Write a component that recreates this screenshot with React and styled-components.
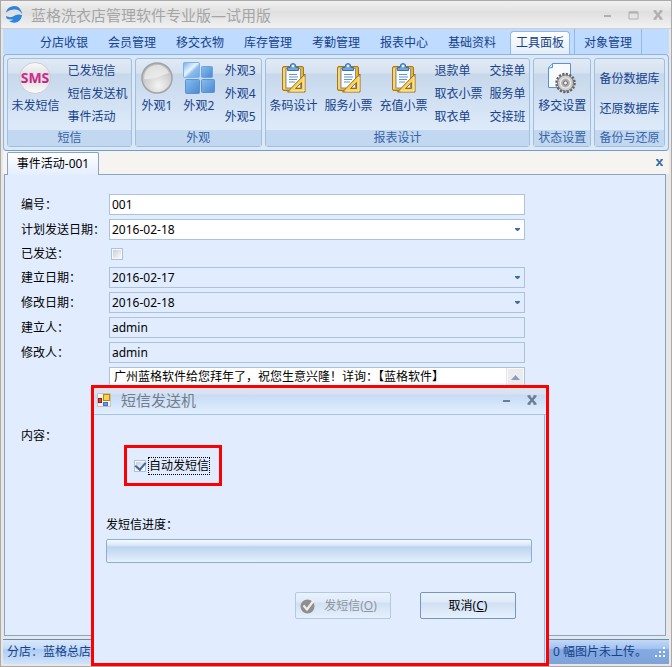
import React from 'react';
import styled, { createGlobalStyle } from 'styled-components';

const topTabs = ['分店收银', '会员管理', '移交衣物', '库存管理', '考勤管理', '报表中心', '基础资料', '工具面板'];

const LogoIcon = () => (
    <svg width="18" height="18" viewBox="0 0 18 18" aria-hidden="true">
        <path d="M1 6.500 A8 8 0 0 1 16 4.500 Q17 6 17.200 8 Q14 3.200 9 3.600 Q4.500 3.800 1 6.500 Z" fill="#2e86dc"/>
        <path d="M1 10 Q4.500 12 8 10.500 Q12 7.500 17 9 Q16.500 14 12.500 16 Q8 18 4 15 Q7 15 8.500 13.200 Q4.500 14 1.500 12.500 Z" fill="#2e86dc"/>
    </svg>
);

const SmsIcon = () => (
    <svg width="32" height="32" viewBox="0 0 32 32">
        <defs>
            <linearGradient id="smsBall" x1="0" y1="0" x2="0" y2="1">
                <stop offset="0" stopColor="#fafafa"/>
                <stop offset="0.5" stopColor="#dcdcde"/>
                <stop offset="1" stopColor="#fdfdfd"/>
            </linearGradient>
            <linearGradient id="smsText" x1="0" y1="0" x2="0" y2="1">
                <stop offset="0" stopColor="#e0359f"/>
                <stop offset="1" stopColor="#b8197c"/>
            </linearGradient>
        </defs>
        <circle cx="16" cy="16" r="15.500" fill="url(#smsBall)" stroke="#c9ced6"/>
        <SmsText x="16" y="21" textAnchor="middle">SMS</SmsText>
    </svg>
);

const BallIcon = () => (
    <svg width="32" height="32" viewBox="0 0 32 32">
        <defs>
            <radialGradient id="ball" cx="0.55" cy="0.75" r="0.75">
                <stop offset="0" stopColor="#f4f4f4"/>
                <stop offset="0.6" stopColor="#cfcfcf"/>
                <stop offset="1" stopColor="#b5b5b5"/>
            </radialGradient>
        </defs>
        <circle cx="16" cy="16" r="15" fill="url(#ball)" stroke="#a3a3a3" strokeWidth="1.500"/>
        <path d="M3 17 A13 13 0 0 1 28 11 Q24 12 20 14 Q12 18 3 17 Z" fill="#f3f3f3" opacity="0.65"/>
    </svg>
);

const SquaresIcon = () => (
    <svg width="32" height="32" viewBox="0 0 32 32">
        <defs>
            <linearGradient id="sqLight" x1="0" y1="0" x2="1" y2="1">
                <stop offset="0" stopColor="#74b0ea"/>
                <stop offset="0.45" stopColor="#eaf4fd"/>
                <stop offset="0.6" stopColor="#8bbdee"/>
                <stop offset="1" stopColor="#6ba5e2"/>
            </linearGradient>
            <linearGradient id="sqBlue" x1="0" y1="0" x2="1" y2="1">
                <stop offset="0" stopColor="#8abdf0"/>
                <stop offset="1" stopColor="#4988cf"/>
            </linearGradient>
        </defs>
        <rect x="0.500" y="0.500" width="16" height="15" rx="1" fill="url(#sqLight)" stroke="#7fb2e6"/>
        <rect x="18.500" y="4.500" width="11" height="11" rx="1" fill="url(#sqBlue)" stroke="#6fa4de"/>
        <rect x="2.500" y="17.500" width="14" height="14" rx="1" fill="url(#sqBlue)" stroke="#5b94d6"/>
        <rect x="18.500" y="17.500" width="13" height="13" rx="1" fill="url(#sqBlue)" stroke="#5b94d6"/>
    </svg>
);

const ClipboardIcon = () => (
    <svg width="32" height="32" viewBox="0 0 32 32">
        <rect x="5.500" y="4.500" width="21" height="24" rx="1.500" fill="#f0b429" stroke="#a8741a"/>
        <path d="M7 6 V27" stroke="#ffe08a" strokeWidth="1.500"/>
        <path d="M9 6.500 H23.500 V26 H9 Z" fill="#fafdff" stroke="#7693b8"/>
        <path d="M12 12.500 h8 M12 15 h9 M12 17.500 h8 M12 20 h6" stroke="#6a93c6" strokeWidth="1"/>
        <path d="M10.500 8.500 V5.500 H13 Q13 1.500 16 1.500 Q19 1.500 19 5.500 H21.500 V8.500 Z" fill="#6ea6dd" stroke="#3f6fa8"/>
        <circle cx="16" cy="4" r="1.200" fill="#eef6ff"/>
        <path d="M28 12 V30 H10.500 Z M24.500 20.500 L18.500 26.500 H24.500 Z" fill="#f8d45c" stroke="#a06a1e" fillRule="evenodd"/>
        <path d="M27 15 V29 H13.500" fill="none" stroke="#fff0ad" strokeWidth="1"/>
    </svg>
);

const GearPageIcon = () => (
    <svg width="32" height="32" viewBox="0 0 32 32">
        <path d="M6.500 1.500 H24.500 V25.500 H2.500 V5.500 Z" fill="#f7fbff" stroke="#5b92cf"/>
        <path d="M2.500 6 L6.500 5.500 V1.500" fill="#d4e6f8" stroke="#5b92cf"/>
        <circle cx="19.500" cy="21" r="9" fill="none" stroke="#626262" strokeWidth="2.500" strokeDasharray="2.200 1.334"/>
        <circle cx="19.500" cy="21" r="8" fill="#cdcdcd" stroke="#757575"/>
        <circle cx="19.500" cy="21" r="5" fill="#b0b0b0" stroke="#ececec" strokeWidth="1.200"/>
        <circle cx="19.500" cy="21" r="2" fill="#f2f4f6" stroke="#6a6a6a"/>
    </svg>
);

const FormIcon = () => (
    <svg width="14" height="14" viewBox="0 0 14 14" aria-hidden="true">
        <path d="M0.500 0.500 h13 v13 h-13 z" fill="#f4f2ef" stroke="#c5c2be"/>
        <rect x="6.500" y="1.500" width="6" height="6" fill="#fbd04b" stroke="#b98512"/>
        <rect x="1.500" y="5.500" width="3" height="4" fill="#d9472f" stroke="#9b1c10"/>
        <rect x="6.500" y="9.500" width="4" height="3" fill="#5b9bf0" stroke="#3b74c4"/>
    </svg>
);

const CheckBallIcon = () => (
    <svg width="16" height="16" viewBox="0 0 16 16" aria-hidden="true">
        <circle cx="7.500" cy="8.500" r="7" fill="#8f8f8f"/>
        <path d="M3.500 7.500 L7 11.500 L14 2" fill="none" stroke="#eeeeea" strokeWidth="2.200"/>
    </svg>
);

const ArrowDown = () => (
    <svg width="5" height="3" viewBox="0 0 5 3"><path d="M0 0 H5 V1 L3 3 H2 L0 1 Z" fill="#3a6ea5"/></svg>
);

const ArrowUp = () => (
    <svg width="9" height="5" viewBox="0 0 9 5"><path d="M0 5 L4.500 0 L9 5 Z" fill="#8e9cc4"/></svg>
);

const MinIcon = () => (
    <svg width="12" height="12" viewBox="0 0 12 12"><path d="M2 6 h7 v2 h-7 z" fill="currentColor"/></svg>
);

const MaxIcon = () => (
    <svg width="12" height="12" viewBox="0 0 12 12">
        <path d="M2 3 h9 v7 h-9 z" fill="none" stroke="currentColor"/>
        <path d="M2 3.500 h9" stroke="currentColor" strokeWidth="2"/>
    </svg>
);

const CloseIcon = ({ size = 12 }) => (
    <svg width={size} height={size} viewBox="0 0 12 12">
        <path d="M2.500 2 L9.500 10 M9.500 2 L2.500 10" stroke="currentColor" strokeWidth="2.500"/>
        <path d="M1.500 2 h3 M7.500 2 h3 M1.500 10 h3 M7.500 10 h3" stroke="currentColor" strokeWidth="1.500"/>
    </svg>
);

const GripIcon = () => (
    <svg width="11" height="11" viewBox="0 0 11 11" aria-hidden="true">
        <path d="M8 0h2v2h-2z M4 4h2v2h-2z M8 4h2v2h-2z M0 8h2v2h-2z M4 8h2v2h-2z M8 8h2v2h-2z" fill="#f2f7ff"/>
    </svg>
);

const BigItem = ({ icon, text }) => (
    <BigButton type="button">
        {icon}
        {text}
    </BigButton>
);

const SmallItems = ({ items, spread }) => (
    <SmallColumn $spread={spread}>
        {items.map((item) => <SmallButton type="button" key={item}>{item}</SmallButton>)}
    </SmallColumn>
);

const Group = ({ title, size, gap, children }) => (
    <GroupBox $size={size} aria-label={title}>
        <GroupItems $gap={gap}>{children}</GroupItems>
        <GroupTitle>{title}</GroupTitle>
    </GroupBox>
);

const TextField = ({ id, label, value, readOnly, date }) => (
    <>
        <Label htmlFor={id}>{label}</Label>
        <Field $readOnly={readOnly}>
            <FieldInput id={id} type="text" defaultValue={value} readOnly={readOnly}/>
            {date && <DropButton type="button" aria-label="选择日期"><ArrowDown/></DropButton>}
        </Field>
    </>
);

const SmsDialog = () => (
    <Dialog role="dialog" aria-labelledby="smsTitle">
        <DialogHeader>
            <FormIcon/>
            <DialogTitle id="smsTitle">短信发送机</DialogTitle>
            <DialogTool type="button" aria-label="最小化"><MinIcon/></DialogTool>
            <DialogTool type="button" aria-label="关闭"><CloseIcon/></DialogTool>
        </DialogHeader>
        <DialogBody>
            <Highlight>
                <CheckBox id="autoSend" type="checkbox" defaultChecked/>
                <FocusLabel htmlFor="autoSend">自动发短信</FocusLabel>
            </Highlight>
            <ProgressLabel htmlFor="progress">发短信进度：</ProgressLabel>
            <ProgressBar id="progress" value="0" max="100"/>
            <DialogButtons>
                <DialogButton type="button" disabled>
                    <CheckBallIcon/>
                    <span>发短信(<u>O</u>)</span>
                </DialogButton>
                <DialogButton type="button"><span>取消(<u>C</u>)</span></DialogButton>
            </DialogButtons>
        </DialogBody>
    </Dialog>
);

const App = () => {
    return (
        <Window>
            <GlobalStyle/>
            <TitleBar>
                <LogoIcon/>
                <Title>蓝格洗衣店管理软件专业版—试用版</Title>
                <TitleTool type="button" aria-label="最小化"><MinIcon/></TitleTool>
                <TitleTool type="button" aria-label="最大化"><MaxIcon/></TitleTool>
                <TitleTool type="button" aria-label="关闭"><CloseIcon/></TitleTool>
            </TitleBar>
            <Tabs>
                {topTabs.map((tab) => (
                    <Tab type="button" key={tab} $active={tab === '工具面板'}>{tab}</Tab>
                ))}
                <SideTab type="button">对象管理</SideTab>
            </Tabs>
            <Ribbon>
                <Group title="短信" size={125} gap={8}>
                    <BigItem icon={<SmsIcon/>} text="未发短信"/>
                    <SmallItems items={['已发短信', '短信发送机', '事件活动']}/>
                </Group>
                <Group title="外观" size={127} gap={10}>
                    <BigItem icon={<BallIcon/>} text="外观1"/>
                    <BigItem icon={<SquaresIcon/>} text="外观2"/>
                    <SmallItems items={['外观3', '外观4', '外观5']}/>
                </Group>
                <Group title="报表设计" size={268} gap={7}>
                    <BigItem icon={<ClipboardIcon/>} text="条码设计"/>
                    <BigItem icon={<ClipboardIcon/>} text="服务小票"/>
                    <BigItem icon={<ClipboardIcon/>} text="充值小票"/>
                    <SmallItems items={['退款单', '取衣小票', '取衣单']}/>
                    <SmallItems items={['交接单', '服务单', '交接班']}/>
                </Group>
                <Group title="状态设置" size={57} gap={0}>
                    <BigItem icon={<GearPageIcon/>} text="移交设置"/>
                </Group>
                <Group title="备份与还原" size={70} gap={0}>
                    <SmallItems items={['备份数据库', '还原数据库']} spread/>
                </Group>
            </Ribbon>
            <DocTabs>
                <DocTab type="button">事件活动-001</DocTab>
                <DocClose type="button" aria-label="关闭"><CloseIcon size={9}/></DocClose>
            </DocTabs>
            <Page>
                <Form>
                    <TextField id="code" label="编号：" value="001"/>
                    <TextField id="planDate" label="计划发送日期：" value="2016-02-18" date/>
                    <Label htmlFor="sent">已发送：</Label>
                    <CheckCell><CheckBox id="sent" type="checkbox"/></CheckCell>
                    <TextField id="createDate" label="建立日期：" value="2016-02-17" readOnly date/>
                    <TextField id="editDate" label="修改日期：" value="2016-02-18" readOnly date/>
                    <TextField id="creator" label="建立人：" value="admin" readOnly/>
                    <TextField id="editor" label="修改人：" value="admin" readOnly/>
                    <Label htmlFor="content">内容：</Label>
                    <Memo>
                        <MemoText id="content" defaultValue="广州蓝格软件给您拜年了，祝您生意兴隆！详询：【蓝格软件】"/>
                        <MemoScroll><ScrollButton type="button" aria-label="向上"><ArrowUp/></ScrollButton></MemoScroll>
                    </Memo>
                </Form>
            </Page>
            <StatusBar>
                <StatusLeft>分店：蓝格总店</StatusLeft>
                <StatusRight>
                    0 幅图片未上传。
                    <GripIcon/>
                </StatusRight>
            </StatusBar>
            <SmsDialog/>
        </Window>
    );
};

const GlobalStyle = createGlobalStyle`
  * {
    box-sizing: border-box;
  }

  body {
    margin: 0;
    font-family: "Noto Sans", "Noto Sans CJK SC", sans-serif;
    font-size: 12px;
    line-height: 18px;
    color: #000;
  }

  button, input, textarea {
    font: inherit;
    color: inherit;
    margin: 0;
    padding: 0;
    border: none;
    background: none;
    white-space: nowrap;
  }

  svg {
    display: block;
    flex: none;
  }
`;

const SmsText = styled.text`
  font-family: "Noto Sans", sans-serif;
  font-size: 14px;
  font-weight: 700;
  fill: url(#smsText);
`;

const Window = styled.div`
  position: relative;
  display: flex;
  flex-direction: column;
  min-height: 100vh;
  padding: 0 2px 2px;
  border: 1px solid #aaa;
  background: #e8e7e4;
`;

const TitleBar = styled.header`
  display: flex;
  align-items: center;
  height: 28px;
  padding: 0 1px 0 4px;
  margin: 0 -2px;
  border-bottom: 1px solid #d0cfcd;
  background: linear-gradient(#f1f1f1, #e4e4e4 35%, #dfdfdf 40%, #f1f1f1);
  color: #b0b0b0;
`;

const Title = styled.h1`
  flex: 1;
  margin: 0 0 0 8px;
  font-size: 15px;
  font-weight: 400;
  line-height: 20px;
  color: #a5a5a5;
`;

const TitleTool = styled.button`
  display: flex;
  justify-content: center;
  width: 25px;
  padding: 4px 0;
`;

const Tabs = styled.nav`
  display: flex;
  align-items: flex-end;
  height: 25px;
  padding-left: 27px;
  background: #bfdbff;
  color: #15428b;
`;

const Tab = styled.button`
  position: relative;
  width: 60px;
  height: 23px;
  margin: 0 4px;
  border: 1px solid ${({ $active }) => ($active ? '#8db8ea' : 'transparent')};
  border-bottom: none;
  border-radius: 4px 4px 0 0;
  background: ${({ $active }) => ($active ? 'linear-gradient(#fff, #e3edf8)' : 'none')};
`;

const SideTab = styled.button`
  width: 68px;
  height: 25px;
  padding-top: 2px;
  border: solid #8fb9ea;
  border-width: 0 1px;
`;

const Ribbon = styled.section`
  display: flex;
  gap: 3px;
  height: 97px;
  padding: 3px;
  border: 1px solid #8db2e3;
  border-bottom-color: #6f9dd0;
  border-radius: 4px;
  background: #dbe8f7;
  color: #15428b;
`;

const GroupBox = styled.section`
  display: flex;
  flex-direction: column;
  flex: ${({ $size }) => $size} 1 0;
  min-width: 0;
  border: 1px solid #9fbfdc;
  border-radius: 3px;
  background: linear-gradient(#e1eaf5, #d6e2f0 14px, #c7d8ec 15px, #deebfa 73px);
`;

const GroupItems = styled.div`
  display: flex;
  flex: 1;
  justify-content: center;
  gap: ${({ $gap }) => $gap}px;
  padding-top: 3px;
`;

const GroupTitle = styled.div`
  height: 16px;
  line-height: 16px;
  text-align: center;
  white-space: nowrap;
  background: #c1d8f0;
  color: #3764a8;
`;

const BigButton = styled.button`
  display: flex;
  flex-direction: column;
  align-items: center;
  gap: 3px;
  align-self: flex-start;
`;

const SmallColumn = styled.div`
  display: flex;
  flex-direction: column;
  gap: ${({ $spread }) => ($spread ? 12 : 5)}px;
  padding-top: ${({ $spread }) => ($spread ? 8 : 0)}px;
`;

const SmallButton = styled.button`
  height: 18px;
  text-align: left;
`;

const DocTabs = styled.div`
  display: flex;
  align-items: flex-end;
  justify-content: space-between;
  height: 23px;
  padding: 0 5px 0 4px;
  background: #f5f4f1;
`;

const DocTab = styled.button`
  position: relative;
  z-index: 1;
  width: 92px;
  height: 23px;
  margin-bottom: -1px;
  border: 1px solid #8ba1c6;
  border-bottom: none;
  border-radius: 2px 2px 0 0;
  background: linear-gradient(#fff, #e3eeff);
`;

const DocClose = styled.button`
  align-self: center;
  color: #3b6fb0;
`;

const Page = styled.main`
  flex: 1;
  margin: 0 3px 3px 1px;
  padding: 19px 16px;
  border: 1px solid #8ba3ca;
  background: #e1edff;
`;

const Form = styled.form`
  display: grid;
  grid-template-columns: 88px minmax(0, 416px);
  align-items: center;
  row-gap: 4px;
`;

const Label = styled.label`
  white-space: nowrap;
`;

const Field = styled.div`
  display: flex;
  height: 21px;
  border: 1px solid #abc1de;
  background: ${({ $readOnly }) => ($readOnly ? 'transparent' : '#fff')};
`;

const FieldInput = styled.input`
  flex: 1;
  min-width: 0;
  padding: 0 2px;
  outline: none;
`;

const DropButton = styled.button`
  display: flex;
  align-items: center;
  justify-content: center;
  width: 14px;
`;

const CheckCell = styled.div`
  display: flex;
  align-items: center;
  height: 19px;
  padding-left: 2px;
`;

const CheckBox = styled.input`
  appearance: none;
  display: grid;
  place-content: center;
  flex: none;
  width: 12px;
  height: 12px;
  border: 1px solid #abc1de;
  background: linear-gradient(135deg, #c9ced6, #fbfbfb) content-box, #f6f8fb;
  padding: 1px;

  &:checked::before {
    content: '';
    width: 5px;
    height: 8px;
    margin-bottom: 2px;
    border: solid #3f6597;
    border-width: 0 2px 2px 0;
    transform: rotate(40deg);
  }
`;

const Memo = styled.div`
  display: flex;
  height: 138px;
  border: 1px solid #abc1de;
  background: #fff;
`;

const MemoText = styled.textarea`
  flex: 1;
  min-width: 0;
  padding: 0 4px;
  resize: none;
  outline: none;
  overflow: hidden;
`;

const MemoScroll = styled.div`
  width: 18px;
  padding: 1px;
  border-left: 1px solid #e6e6e6;
  background: #f8f8f8;
`;

const ScrollButton = styled.button`
  display: flex;
  align-items: center;
  justify-content: center;
  width: 100%;
  height: 16px;
  background: #ececee;
`;

const StatusBar = styled.footer`
  display: flex;
  align-items: stretch;
  height: 25px;
  border-top: 1px solid #5f8ec2;
  line-height: 24px;
  color: #15428b;
`;

const StatusLeft = styled.div`
  flex: 1;
  padding-left: 4px;
  background: linear-gradient(#d9e8fb, #c5dcf8 35%, #afcdf3 40%, #cfe3fb);
`;

const StatusRight = styled.div`
  display: flex;
  align-items: center;
  justify-content: space-between;
  width: 120px;
  padding: 0 3px 0 4px;
  background: linear-gradient(#c2d9f8, #a4c4f0 35%, #83aae2 40%, #7ea3da);
`;

const Dialog = styled.section`
  position: absolute;
  left: 90px;
  bottom: 0;
  z-index: 2;
  display: flex;
  flex-direction: column;
  width: 458px;
  height: 281px;
  border: 3px solid #f00;
  background: #e1edff;
`;

const DialogHeader = styled.header`
  display: flex;
  align-items: center;
  height: 27px;
  padding: 0 2px 3px 3px;
  border-bottom: 1px solid #9dc4ec;
  background: linear-gradient(#e2e2ef, #d9e2f2 6px, #c6dbf5 7px, #e4efff);
  color: #6c7c92;
`;

const DialogTitle = styled.h2`
  flex: 1;
  margin: 0 0 0 10px;
  font-size: 15px;
  font-weight: 400;
  line-height: 20px;
  color: #747d8a;
`;

const DialogTool = styled.button`
  display: flex;
  justify-content: center;
  width: 25px;
`;

const DialogBody = styled.div`
  display: flex;
  flex-direction: column;
  align-items: flex-start;
  flex: 1;
  margin-right: 1px;
  padding: 30px 12px;
  border-right: 1px solid #94b8e2;
`;

const Highlight = styled.div`
  display: flex;
  align-items: center;
  gap: 2px;
  width: 98px;
  height: 41px;
  margin-left: 18px;
  padding-left: 7px;
  border: 3px solid #f00;
`;

const FocusLabel = styled.label`
  border: 1px dotted #000;
  line-height: 16px;
  white-space: nowrap;
`;

const ProgressLabel = styled.label`
  margin-top: 30px;
`;

const ProgressBar = styled.progress`
  appearance: none;
  width: 100%;
  height: 24px;
  margin-top: 5px;
  border: 1px solid #8aaed8;
  border-radius: 2px;
  background: linear-gradient(#f6faff, #dce9f9 5px, #bdd4f0 7px, #e6f0fd);

  &::-webkit-progress-bar {
    background: transparent;
  }
`;

const DialogButtons = styled.div`
  display: flex;
  align-self: flex-end;
  gap: 29px;
  margin: 29px 16px 0 0;
`;

const DialogButton = styled.button`
  display: flex;
  align-items: center;
  justify-content: center;
  gap: 8px;
  width: 96px;
  height: 27px;
  border: 1px solid #7396c4;
  border-radius: 2px;
  background: linear-gradient(#e9f2fd, #dfebf9 9px, #d0e0f3 10px, #e6f0fd);

  &:disabled {
    padding-right: 9px;
    border-color: #b4c8e2;
    color: #8f959e;
  }
`;

export default App;
